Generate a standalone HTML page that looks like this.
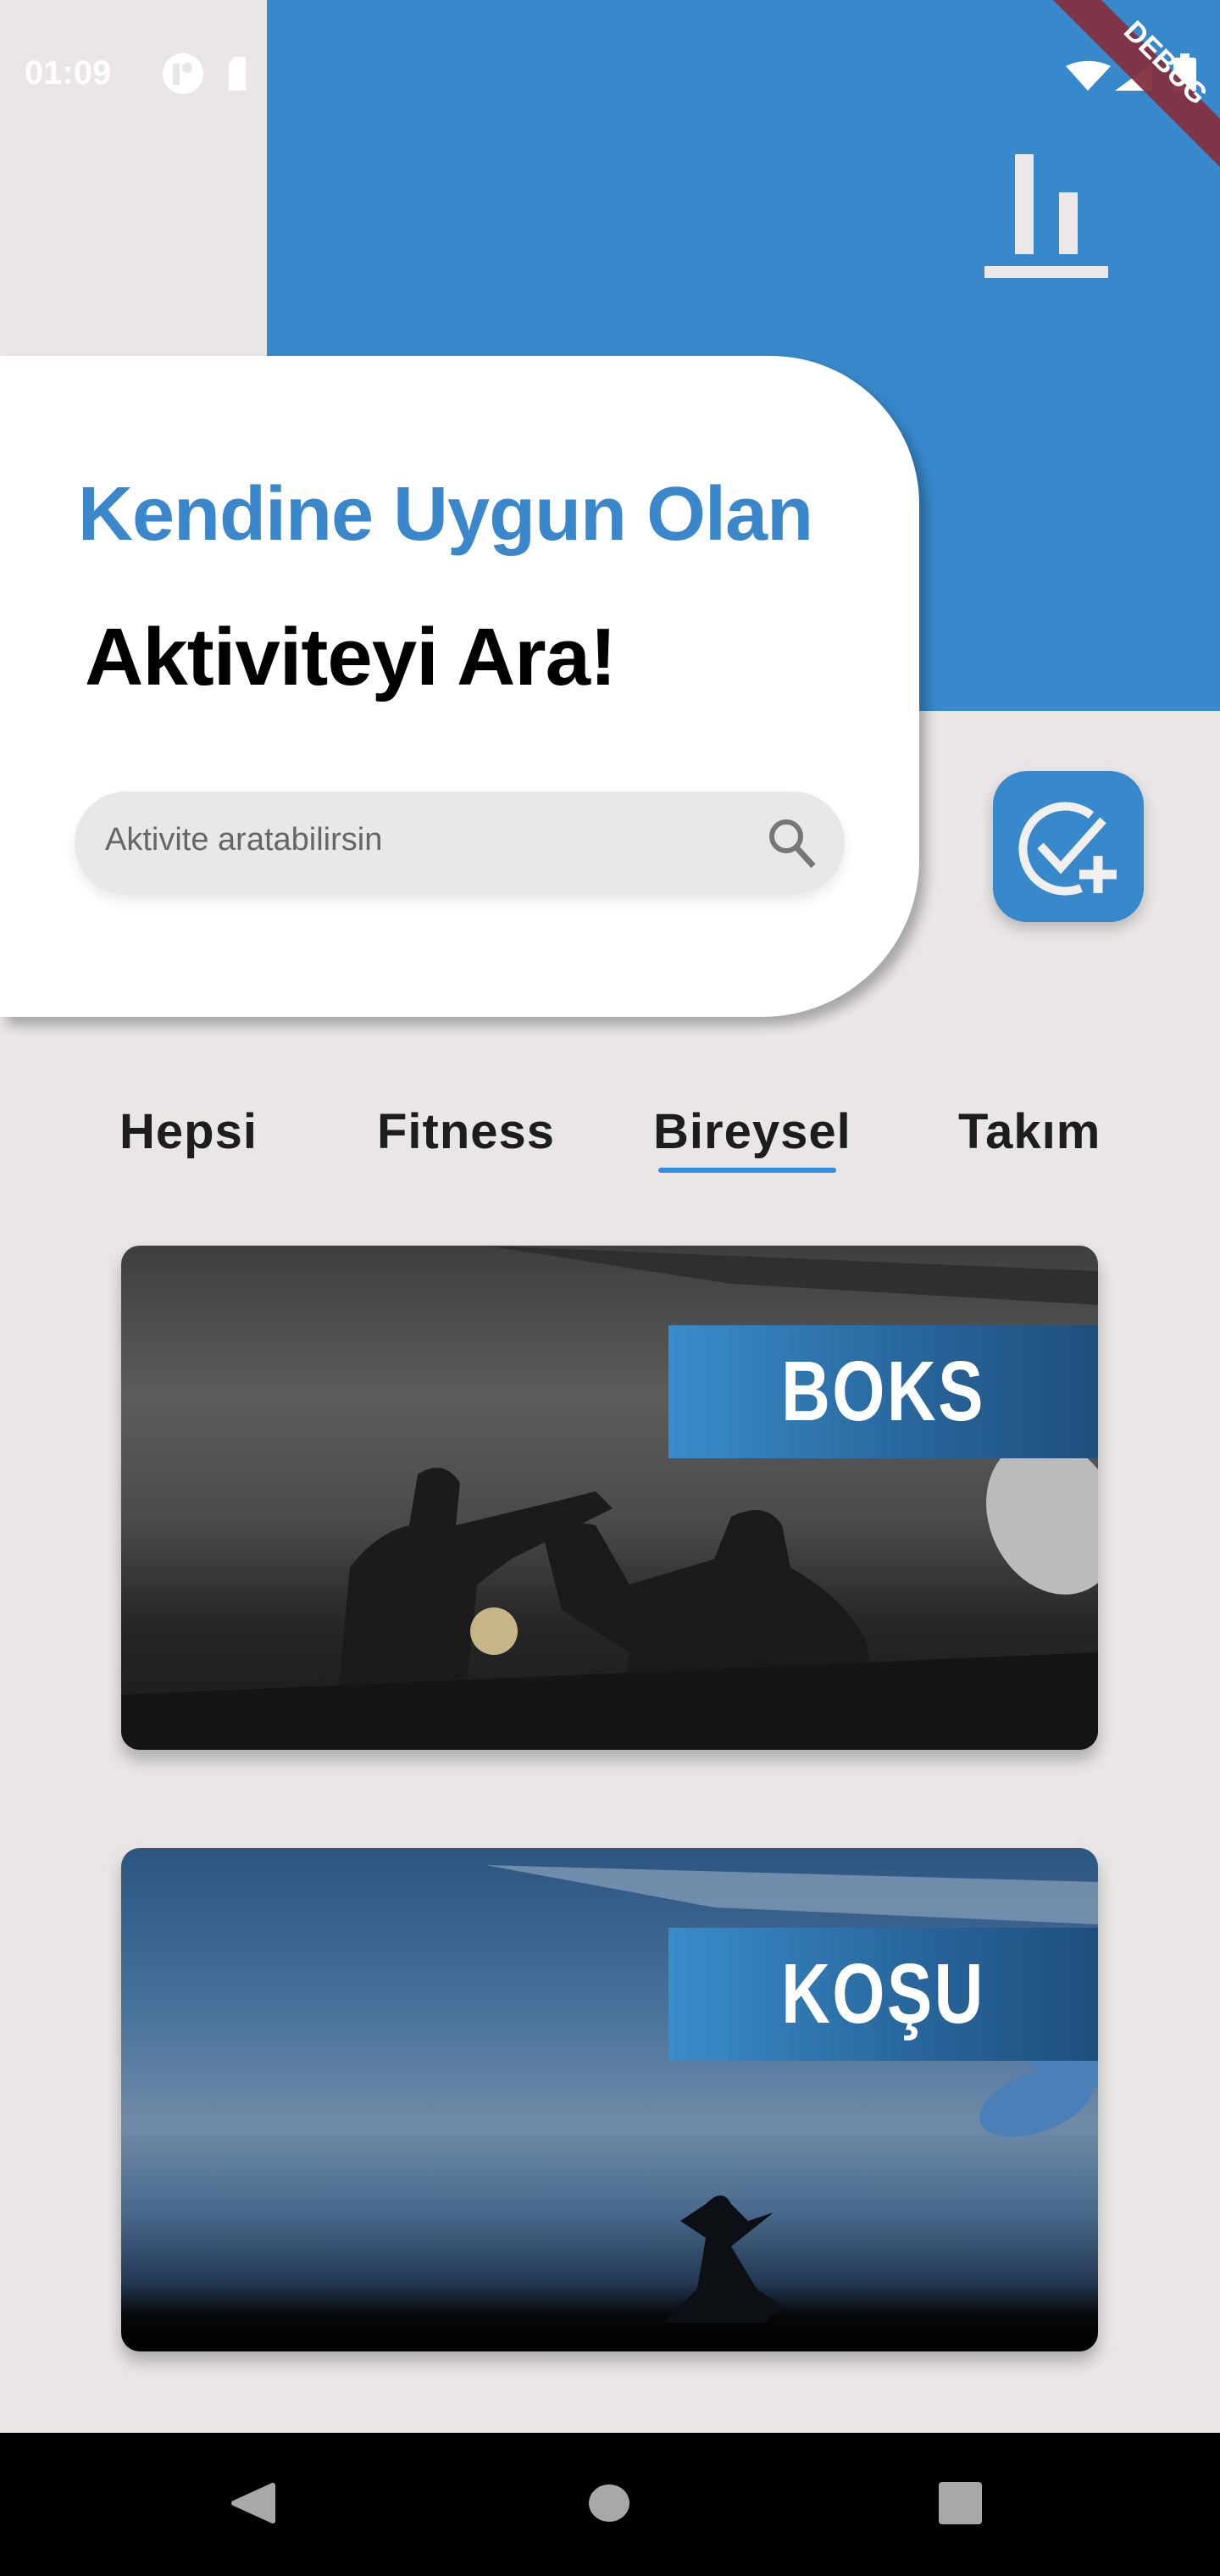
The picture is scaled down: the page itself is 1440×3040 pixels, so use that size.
<!DOCTYPE html>
<html><head><meta charset="utf-8"><style>
*{margin:0;padding:0;box-sizing:border-box}
body{width:1440px;height:3040px;background:#e9e6e5;position:relative;overflow:hidden;font-family:"Liberation Sans",sans-serif}
.abs{position:absolute}
.blue{left:315px;top:0;width:1125px;height:839px;background:#3888cc}
.card{left:0;top:420px;width:1085px;height:780px;background:#fff;border-radius:0 175px 185px 0;box-shadow:8px 10px 14px rgba(0,0,0,.28)}
.t1{left:92px;top:556px;font-size:90px;color:#3a87cb;white-space:nowrap;font-weight:bold;letter-spacing:-1px}
.t2{left:100px;top:721px;font-size:96px;color:#000;white-space:nowrap;font-weight:bold;letter-spacing:-1px}
.search{left:88px;top:934px;width:909px;height:122px;border-radius:61px;background:#e8e8e8;box-shadow:0 8px 14px rgba(0,0,0,.08)}
.ph{left:124px;top:970px;font-size:38px;color:#666}
.fab{left:1172px;top:910px;width:178px;height:178px;border-radius:40px;background:#3888cc;box-shadow:0 8px 16px rgba(0,0,0,.2)}
.tab{top:1302px;font-size:58px;color:#1d1d1f;font-weight:bold;letter-spacing:1px}
.ic{left:143px;width:1153px;border-radius:22px;overflow:hidden;box-shadow:0 12px 18px rgba(0,0,0,.25)}
.ban{position:absolute;left:646px;width:507px;height:157px;background:linear-gradient(90deg,#3a8cca,#27649a 60%,#1e4e7d)}
.ban span{position:absolute;left:0;width:507px;text-align:center;color:#fff;font-weight:bold;font-size:100px;line-height:157px;letter-spacing:3px;transform:scaleX(.8);transform-origin:center}
.nav{left:0;top:2871px;width:1440px;height:169px;background:#000}
</style></head><body>
<div class="abs blue"></div>
<div class="abs" style="left:29px;top:64px;font-size:40px;color:#fff;font-weight:bold">01:09</div>
<svg class="abs" style="left:190px;top:60px" width="110" height="55"><circle cx="26" cy="27" r="24" fill="#fff"/><rect x="14" y="15" width="8" height="25" fill="#e9e6e5"/><circle cx="31" cy="20" r="6" fill="#e9e6e5"/><path d="M86 7h14v40h-20v-32z" fill="#fff"/></svg>
<svg class="abs" style="left:1160px;top:170px" width="160" height="170"><rect x="38" y="12" width="22" height="118" fill="#ebe8e7"/><rect x="90" y="57" width="22" height="73" fill="#ebe8e7"/><rect x="2" y="144" width="146" height="14" fill="#ebe8e7"/></svg>
<svg class="abs" style="left:1240px;top:0" width="200" height="200"><path d="M18 78 A60 60 0 0 1 71 78 L44 107Z" fill="#fff"/><path d="M76 107 L120 75 L120 107Z" fill="#fff"/><rect x="145" y="68" width="27" height="40" rx="3" fill="#fff"/><rect x="153" y="63" width="11" height="6" fill="#fff"/><polygon points="3,0 60,0 200,140 200,197" fill="#823040" opacity=".95"/><text x="0" y="0" transform="translate(128,82) rotate(45)" text-anchor="middle" font-size="34" font-weight="bold" fill="#fff" font-family="Liberation Sans">DEBUG</text></svg>
<div class="abs card"></div>
<div class="abs t1">Kendine Uygun Olan</div>
<div class="abs t2">Aktiviteyi Ara!</div>
<div class="abs search"></div>
<div class="abs ph">Aktivite aratabilirsin</div>
<svg class="abs" style="left:900px;top:960px" width="70" height="70"><circle cx="28" cy="27" r="17" stroke="#777" stroke-width="6" fill="none"/><path d="M40 40L60 62" stroke="#777" stroke-width="7"/></svg>
<div class="abs fab"></div>
<svg class="abs" style="left:1200px;top:940px" width="130" height="130"><path d="M88 22A50 50 0 1 0 76 108" stroke="#f2f0ef" stroke-width="10" fill="none"/><path d="M28 58L52 84L102 28" stroke="#f2f0ef" stroke-width="10" fill="none"/><path d="M96 70v44M74 92h44" stroke="#f2f0ef" stroke-width="11"/></svg>
<div class="abs tab" style="left:141px">Hepsi</div>
<div class="abs tab" style="left:445px">Fitness</div>
<div class="abs tab" style="left:771px">Bireysel</div>
<div class="abs tab" style="left:1131px">Takım</div>
<div class="abs" style="left:777px;top:1378px;width:210px;height:6px;background:#2f8de4;border-radius:3px"></div>
<div class="abs ic" style="top:1470px;height:595px;background:linear-gradient(180deg,#3e3e3e 0%,#5c5c5c 30%,#4a4a4a 55%,#262626 75%,#191919 100%)">
<svg width="1153" height="595" style="position:absolute;left:0;top:0"><path d="M250 595 L270 380 Q300 340 340 330 L350 270 Q380 250 400 280 L395 330 L520 300 L560 290 L580 310 L460 370 L420 400 L400 595Z" fill="#1c1a1a"/><path d="M580 595 L600 480 L520 430 L500 350 Q520 320 560 330 L600 400 L700 370 L720 320 Q760 300 780 330 L790 380 Q860 420 880 470 L900 595Z" fill="#1a1a1a"/><path d="M0 530 L1153 480 L1153 595 L0 595Z" fill="#151515"/><circle cx="440" cy="455" r="28" fill="#f0d8a0" opacity=".8"/><path d="M430 0 L1153 30 L1153 70 L720 45Z" fill="#2a2a2a" opacity=".8"/><ellipse cx="1100" cy="320" rx="75" ry="95" fill="#bbb" transform="rotate(-25 1100 320)"/></svg>
<div class="ban" style="top:94px"><span>BOKS</span></div></div>
<div class="abs ic" style="top:2181px;height:594px;background:linear-gradient(180deg,#2c5580 0%,#45709a 30%,#6f8ba8 55%,#4a6a8e 72%,#243a55 86%,#050608 93%,#000 100%)">
<svg width="1153" height="594" style="position:absolute;left:0;top:0"><path d="M640 560 L680 520 L690 460 L660 440 L690 420 Q710 400 720 420 L740 440 L770 430 L720 470 L750 520 L780 540 L760 560Z" fill="#0c0f14"/><path d="M430 20 L1153 40 L1153 90 L700 70Z" fill="#7f98b4" opacity=".8"/><ellipse cx="1080" cy="300" rx="70" ry="35" fill="#4a7fb8" transform="rotate(-20 1080 300)"/><ellipse cx="1120" cy="250" rx="55" ry="30" fill="#4a7fb8" transform="rotate(20 1120 250)"/></svg>
<div class="ban" style="top:94px"><span>KOŞU</span></div></div>
<div class="abs nav"></div>
<svg class="abs" style="left:0;top:2871px" width="1440" height="169"><path d="M322 62 L276 83 L322 104Z" fill="#a8a8a8" stroke="#a8a8a8" stroke-width="6" stroke-linejoin="round"/><ellipse cx="719" cy="83" rx="24" ry="22" fill="#a8a8a8"/><rect x="1108" y="58" width="51" height="50" rx="4" fill="#a8a8a8"/></svg>
</body></html>
